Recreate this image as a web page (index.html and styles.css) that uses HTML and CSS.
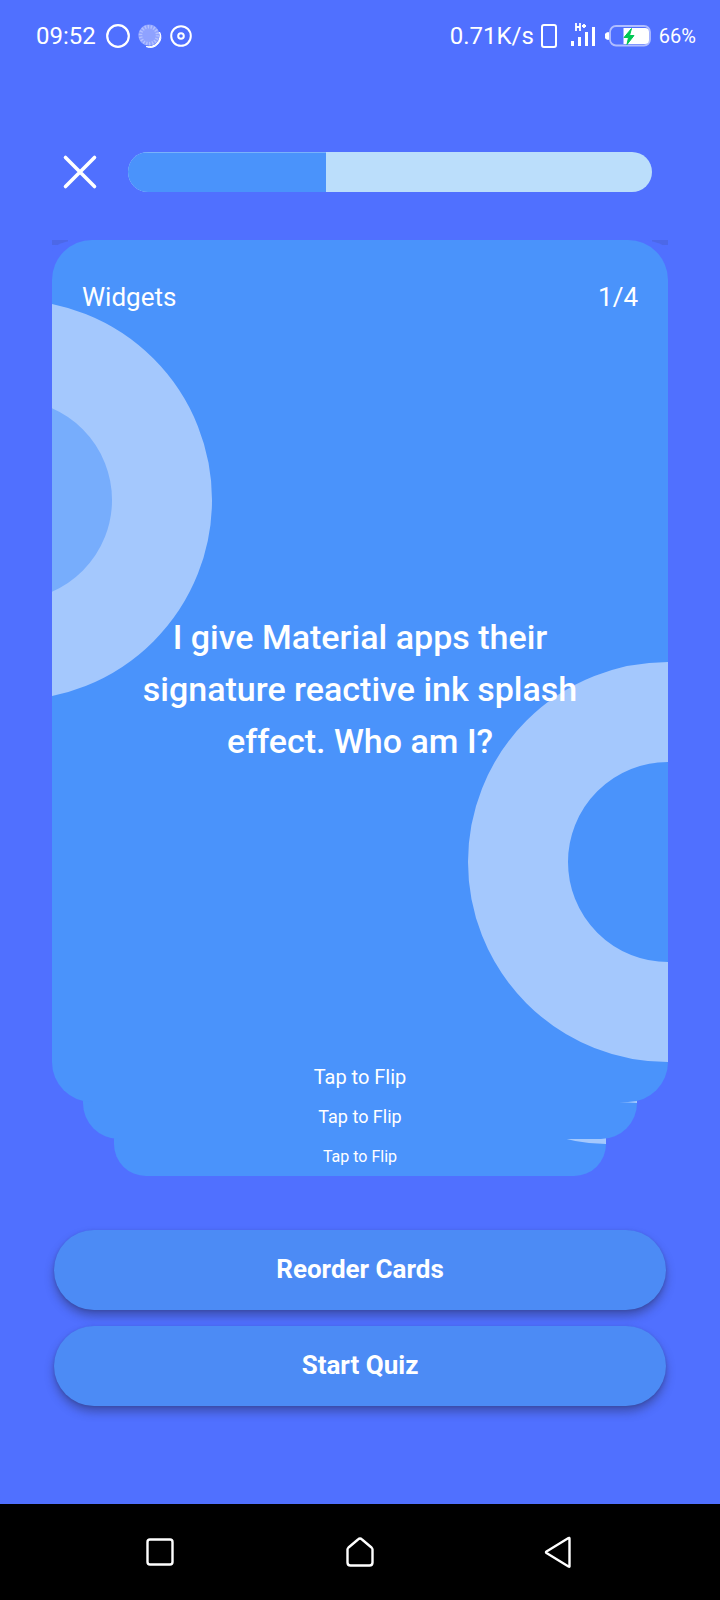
FILE: index.html
```html
<!DOCTYPE html>
<html lang="en">
<head>
<meta charset="utf-8">
<meta name="viewport" content="width=device-width, initial-scale=1">
<title>Widgets flashcards</title>
<link rel="stylesheet" href="styles.css">
</head>
<body>
<div class="app">
  <header class="status-bar">
    <div class="status-group">
      <time class="clock">09:52</time>
      <svg width="24" height="24" viewBox="0 0 24 24" fill="none" stroke="#fff" stroke-width="2.200" aria-hidden="true"><circle cx="12" cy="12" r="10.8"/></svg>
      <svg class="gap-left" width="24" height="24" viewBox="0 0 24 24" fill="none" aria-hidden="true">
        <path d="M21.500 8a10.500 10.500 0 0 1-13.500 14.500a11.500 11.500 0 0 0 13.500-14.500z" fill="#fff" stroke="#fff"/>
        <circle cx="11" cy="11.200" r="10.600" fill="#8fa2ff"/>
        <circle cx="11" cy="11.200" r="8.500" stroke="#b3c0ff" stroke-width="3.500" stroke-dasharray="1.400 1.560"/>
      </svg>
      <svg class="gap-left" width="22" height="24" viewBox="0 0 22 24" fill="none" stroke="#fff" stroke-width="2" aria-hidden="true"><circle cx="11" cy="12" r="9.800"/><circle cx="11" cy="12" r="2.800"/></svg>
    </div>
    <div class="status-group">
      <span class="speed">0.71K/s</span>
      <svg width="18" height="26" viewBox="0 0 18 26" fill="none" stroke="#fff" stroke-width="2" aria-hidden="true"><rect x="2" y="2" width="14" height="22" rx="2"/></svg>
      <svg class="signal" width="26" height="26" viewBox="0 0 26 26" fill="#fff" aria-hidden="true">
        <path d="M1 18h3v5H1zM8 14h3v9H8zM15 9h3v14h-3zM22 4h3v19h-3z"/>
        <path d="M6 0v8M10 0v8M6 4h4M12 3h4M14 1v4" stroke="#fff" stroke-width="1.800" fill="none"/>
      </svg>
      <svg class="battery" width="46" height="24" viewBox="0 0 46 24" aria-hidden="true">
        <path d="M3.500 8.500v7a3.500 3.500 0 0 1 0-7z" fill="#fff" stroke="#fff"/>
        <rect x="5" y="2" width="40" height="19.500" rx="6" fill="none" stroke="#b0bdff" stroke-width="1.800"/>
        <path d="M18.500 4H40q4 0 4 4v8q0 4-4 4H18.500z" fill="#fff"/>
        <path d="M26.500 4.500 19 13.500h4.500L22 20.500l7-9h-4.500z" fill="#00c853" stroke="#00c853"/>
      </svg>
      <span class="charge">66%</span>
    </div>
  </header>

  <main class="quiz">
    <div class="top-row">
      <button class="close" type="button" aria-label="Close">
        <svg width="36" height="36" viewBox="0 0 36 36" fill="none" stroke="#fff" stroke-width="3.600" stroke-linecap="round" aria-hidden="true"><path d="M3.500 3.500l29 29M32.500 3.500l-29 29"/></svg>
      </button>
      <div class="progress" role="progressbar" aria-label="Progress" aria-valuemin="0" aria-valuemax="100" aria-valuenow="38"><div class="progress-fill" style="width:37.8%"></div></div>
    </div>

    <section class="deck" aria-label="Cards">
      <article class="card card-third"><div class="ring ring-right"></div><button class="flip" type="button">Tap to Flip</button></article>
      <article class="card card-second"><div class="ring ring-right"></div><button class="flip" type="button">Tap to Flip</button></article>
      <article class="card card-first">
        <div class="ring ring-left"></div>
        <div class="ring ring-right"></div>
        <div class="card-head"><span>Widgets</span><span>1/4</span></div>
        <h1 class="question">I give Material apps their signature reactive ink splash effect. Who am I?</h1>
        <button class="flip" type="button">Tap to Flip</button>
      </article>
    </section>

    <div class="actions">
      <button class="action" type="button">Reorder Cards</button>
      <button class="action" type="button">Start Quiz</button>
    </div>
  </main>

  <nav class="system-nav" aria-label="System">
    <button class="nav-button" type="button" aria-label="Recent apps"><svg width="32" height="32" viewBox="0 0 32 32" aria-hidden="true"><rect x="3.500" y="3.500" width="25" height="25" rx="2.500"/></svg></button>
    <button class="nav-button" type="button" aria-label="Home"><svg width="32" height="32" viewBox="0 0 32 32" aria-hidden="true"><path d="M16 2.500q1 0 2 1l9.500 8q1 1 1 2V26.500q0 3-3 3h-19q-3 0-3-3V13.500q0-1 1-2l9.500-8q1-1 2-1z"/></svg></button>
    <button class="nav-button" type="button" aria-label="Back"><svg width="32" height="32" viewBox="0 0 32 32" aria-hidden="true"><path d="M25.500 2.500v28q0 .500-1 0L2.500 17q-1-.700 0-1.400L24.500 2q1-.500 1 .500z"/></svg></button>
  </nav>
</div>
</body>
</html>
```
FILE: styles.css
```css
* {
  box-sizing: border-box;
}

body {
  margin: 0;
  background: #5070ff;
  color: #fff;
  font-family: Roboto, "Liberation Sans", sans-serif;
}

svg {
  display: block;
}

button {
  border: 0;
  padding: 0;
  background: none;
  color: inherit;
  font: inherit;
  cursor: pointer;
}

.app {
  display: flex;
  flex-direction: column;
  min-height: 100vh;
}

.status-bar {
  display: flex;
  justify-content: space-between;
  align-items: center;
  height: 72px;
  padding: 0 24px 0 36px;
}

.status-group {
  display: flex;
  align-items: center;
}

.clock {
  margin-right: 10px;
  font-size: 24px;
}

.gap-left {
  margin-left: 8px;
}

.speed {
  margin-right: 6px;
  font-size: 24px;
}

.signal {
  margin: 0 9px 0 12px;
}

.battery {
  margin-right: 8px;
}

.charge {
  font-size: 20px;
}

.quiz {
  display: flex;
  flex: 1;
  flex-direction: column;
  padding: 80px 52px 98px;
}

.top-row {
  display: flex;
  align-items: center;
  gap: 30px;
  padding: 0 16px 0 10px;
}

.progress {
  flex: 1;
  height: 40px;
  overflow: hidden;
  border-radius: 20px;
  background: #bbdefb;
}

.progress-fill {
  height: 100%;
  border-top: 1px solid #79b2fb;
  background: #4a93fb;
}

.deck {
  display: grid;
  flex: 1;
  margin-top: 48px;
  background: linear-gradient(#4c68e8, #4c68e8) top left / 16px 5px no-repeat,
    linear-gradient(#4c68e8, #4c68e8) top right / 16px 5px no-repeat;
}

.deck::before {
  content: "";
  grid-area: 1 / 1;
  border-radius: 32px 32px 0 0 / 11px 11px 0 0;
  background: #5070ff;
}

.card {
  position: relative;
  display: flex;
  grid-area: 1 / 1;
  flex-direction: column;
  justify-content: flex-end;
  overflow: hidden;
  background: #4a93fb;
}

.card-first {
  margin-bottom: 74px;
  padding-bottom: 13px;
  border-radius: 40px;
  font-size: 20px;
}

.card-second {
  margin: 123px 31px 37px;
  padding-bottom: 10px;
  border-radius: 36px;
  font-size: 18px;
}

.card-third {
  margin: 246px 62px 0;
  padding-bottom: 7px;
  border-radius: 32px;
  font-size: 16px;
}

.ring {
  position: absolute;
  border: 100px solid #a4c8fd;
  border-radius: 50%;
  width: 400px;
  height: 400px;
}

.ring-left {
  top: 60px;
  left: -240px;
  background: #77adfc;
}

.ring-right {
  right: -200px;
  bottom: 40px;
}

.card-second .ring {
  right: -180px;
  bottom: 36px;
  width: 360px;
  height: 360px;
  border-width: 90px;
}

.card-third .ring {
  right: -160px;
  bottom: 32px;
  width: 320px;
  height: 320px;
  border-width: 80px;
}

.card-head {
  position: relative;
  display: flex;
  justify-content: space-between;
  padding: 42px 30px 0;
  font-size: 26px;
  line-height: 30px;
}

.question {
  position: relative;
  display: flex;
  flex: 1;
  align-items: center;
  margin: 0 auto;
  max-width: 480px;
  font-size: 34px;
  font-weight: 500;
  line-height: 52px;
  text-align: center;
}

.flip {
  position: relative;
  align-self: center;
  line-height: 24px;
}

.actions {
  display: grid;
  gap: 16px;
  margin-top: 54px;
  padding: 0 2px;
}

.action {
  height: 80px;
  padding-bottom: 2px;
  border-radius: 40px;
  background: #4c8bf5;
  box-shadow: 0 6px 10px rgba(40, 45, 90, 0.45), 0 1px 3px rgba(40, 45, 90, 0.25);
  font-size: 26px;
  font-weight: 700;
}

.system-nav {
  display: flex;
  justify-content: space-around;
  align-items: center;
  height: 96px;
  padding: 0 60px;
  background: #000;
}

.nav-button svg {
  fill: none;
  stroke: #fff;
  stroke-width: 2.4px;
  stroke-linejoin: round;
}
```
